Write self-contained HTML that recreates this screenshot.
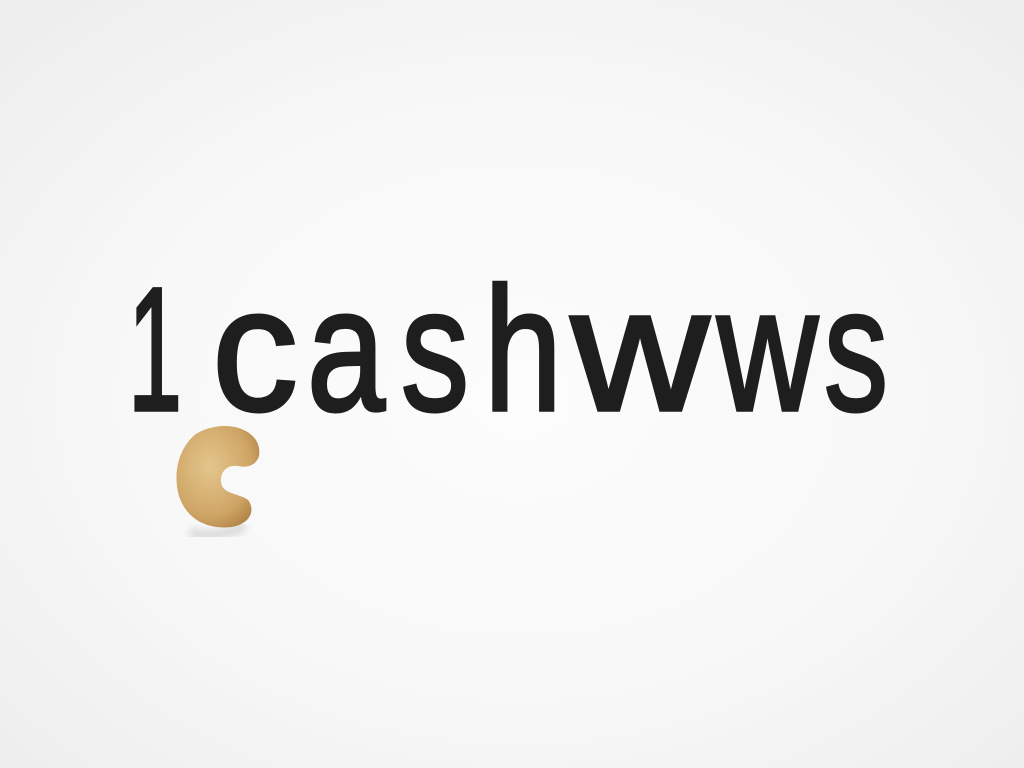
<!DOCTYPE html>
<html><head><meta charset="utf-8"><style>
html,body{margin:0;padding:0;width:1024px;height:768px;overflow:hidden}
body{background:radial-gradient(ellipse 700px 520px at 520px 400px,#fcfcfc 0%,#f8f8f8 55%,#eeeeee 100%)}
svg{position:absolute;left:0;top:0}
text{font-family:"Liberation Sans",sans-serif;font-size:176px;fill:#1e1e1e;stroke:#1e1e1e;stroke-width:3.5px}
</style></head><body>
<svg width="1024" height="768" viewBox="0 0 1024 768">
<defs>
<radialGradient id="c" cx="0.4" cy="0.4" r="0.7"><stop offset="0" stop-color="#e4c68c"/><stop offset="0.7" stop-color="#cfa566"/><stop offset="1" stop-color="#ae8245"/></radialGradient>
<filter id="s" x="-20%" y="-20%" width="140%" height="140%"><feGaussianBlur stdDeviation="4"/></filter>
</defs>
<g>
<text x="128" y="410" textLength="54" lengthAdjust="spacingAndGlyphs">1</text>
<text x="212" y="410" textLength="86" lengthAdjust="spacingAndGlyphs">c</text>
<text x="307" y="410" textLength="78" lengthAdjust="spacingAndGlyphs">a</text>
<text x="401" y="410" textLength="68" lengthAdjust="spacingAndGlyphs">s</text>
<text x="484" y="410" textLength="78" lengthAdjust="spacingAndGlyphs">h</text>
<text x="571" y="410" textLength="138" lengthAdjust="spacingAndGlyphs">w</text>
<text x="717" y="410" textLength="101" lengthAdjust="spacingAndGlyphs">w</text>
<text x="824" y="410" textLength="64" lengthAdjust="spacingAndGlyphs">s</text>
</g>
<path d="M190 532 C205 538 230 534 245 526" stroke="#d4d4d4" stroke-width="8" fill="none" filter="url(#s)"/>
<path d="M222 426 C245 425 262 438 259 456 C256 466 246 468 238 466 C226 464 218 474 222 486 C226 494 240 494 248 500 C256 510 250 524 232 527 C206 530 186 518 179 496 C172 472 180 446 196 434 C204 429 212 427 222 426 Z" fill="url(#c)"/>
</svg>
</body></html>
